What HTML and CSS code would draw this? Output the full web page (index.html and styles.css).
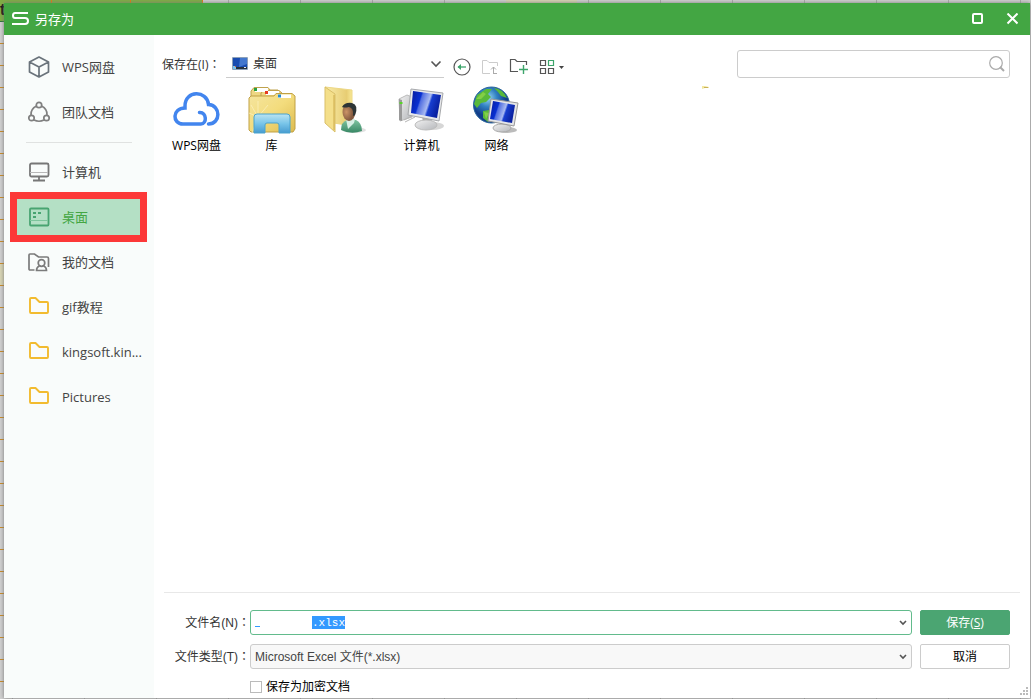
FILE: index.html
```html
<!DOCTYPE html>
<html lang="zh-CN">
<head>
<meta charset="utf-8">
<title>另存为</title>
<link rel="stylesheet" href="styles.css">
</head>
<body>
<div class="sheet-cells" aria-hidden="true"><span>t</span></div>
<div class="dialog">
  <header class="titlebar">
    <svg class="logo" width="18" height="14" viewBox="0 0 18 14" fill="none" stroke="#fff" stroke-width="2"><path d="M17 1H4Q2 1 2 3.500T4 6H14Q17 6 17 9T14 12H1"/></svg>
    <h1>另存为</h1>
    <button class="win-btn" aria-label="最大化"><svg width="12" height="12" viewBox="0 0 12 12" fill="none" stroke="#fff" stroke-width="2"><rect x="2" y="1" width="9" height="9" rx="1"/></svg></button>
    <button class="win-btn" aria-label="关闭"><svg width="12" height="12" viewBox="0 0 12 12" stroke="#fff" stroke-width="2"><path d="M1.500 .5L11.500 10.500M11.500 .5L1.500 10.500"/></svg></button>
  </header>
  <div class="content">
    <nav class="sidebar">
      <a href="#" class="place"><svg width="24" height="24" viewBox="0 0 24 24" fill="none" stroke="#6a737b" stroke-width="1.700" stroke-linejoin="round"><path d="M12 2L21.500 7V17L12 22L2.500 17V7ZM2.500 7L12 12L21.500 7M12 12V22"/></svg><span>WPS网盘</span></a>
      <a href="#" class="place"><svg width="24" height="24" viewBox="0 0 24 24" fill="none" stroke="#808080" stroke-width="1.700"><circle cx="12" cy="5" r="2.700"/><circle cx="4.500" cy="18" r="2.700"/><circle cx="19.500" cy="18" r="2.700"/><path d="M9.500 6Q3.500 9 4 15M14.500 6Q20.500 9 20 15M7 20Q12 22.500 17 20"/></svg><span>团队文档</span></a>
      <hr>
      <a href="#" class="place"><svg width="24" height="24" viewBox="0 0 24 24" fill="none" stroke="#777" stroke-width="1.800"><rect x="3" y="3.500" width="18.500" height="13" rx="1.500"/><path d="M12 17V20M6 20.500H18"/><path d="M3 12.500H21" stroke="#b8b8b8" stroke-width="1"/></svg><span>计算机</span></a>
      <a href="#" class="place current" aria-current="page"><svg width="24" height="24" viewBox="0 0 24 24" fill="none" stroke="#48a471" stroke-width="1.800"><rect x="3" y="3.500" width="18.500" height="17" rx="1"/><path d="M6 8H9M11 8H14M6 12H9"/><path d="M3 15.500H21" stroke="#7dc59c" stroke-width="1"/></svg><span>桌面</span></a>
      <a href="#" class="place"><svg width="24" height="24" viewBox="0 0 24 24" fill="none" stroke="#7b7b7b" stroke-width="1.700"><path d="M7.500 20H3Q2 20 2 19V5Q2 4 3 4H7.500L11.500 7H20Q21.500 7 21.500 8.500V17"/><circle cx="14.500" cy="13" r="3.300"/><path d="M12.500 16Q9.500 17 9.500 20.500H19.500Q19.500 17 16.500 16"/></svg><span>我的文档</span></a>
      <a href="#" class="place"><svg width="24" height="24" viewBox="0 0 24 24" fill="none" stroke="#f2bb2f" stroke-width="1.900" stroke-linejoin="round"><path d="M3 4Q3 3 4 3H8.500L12.500 7H20Q21 7 21 8V17Q21 18 20 18H4Q3 18 3 17Z"/></svg><span>gif教程</span></a>
      <a href="#" class="place"><svg width="24" height="24" viewBox="0 0 24 24" fill="none" stroke="#f2bb2f" stroke-width="1.900" stroke-linejoin="round"><path d="M3 4Q3 3 4 3H8.500L12.500 7H20Q21 7 21 8V17Q21 18 20 18H4Q3 18 3 17Z"/></svg><span>kingsoft.kin...</span></a>
      <a href="#" class="place"><svg width="24" height="24" viewBox="0 0 24 24" fill="none" stroke="#f2bb2f" stroke-width="1.900" stroke-linejoin="round"><path d="M3 4Q3 3 4 3H8.500L12.500 7H20Q21 7 21 8V17Q21 18 20 18H4Q3 18 3 17Z"/></svg><span>Pictures</span></a>
    </nav>
    <main class="main">
      <div class="toolbar">
        <label class="in-label" for="folder">保存在(I)<span class="colon" lang="zh-TW">：</span></label>
        <div class="folder-box">
          <svg width="16" height="14" viewBox="0 0 16 14"><rect width="16" height="13" rx="1" fill="#8ca0b8"/><path d="M1 1H15V10H1Z" fill="#194cb0"/><path d="M8 1H15V7L7 10Z" fill="#4377ce"/><path d="M1 10H15V12H1Z" fill="#26313c"/><path d="M1 9H4V12H1Z" fill="#79c4f0"/><path d="M3 9H4V10H3Z" fill="#f05b21"/><path d="M12 10H14V11H12Z" fill="#eee"/></svg>
          <select id="folder"><option>桌面</option></select>
          <svg width="12" height="8" viewBox="0 0 12 8" fill="none" stroke="#555" stroke-width="1.600"><path d="M1.500 1.500L6 6L10.500 1.500"/></svg>
        </div>
        <div class="tools">
          <button aria-label="后退"><svg width="18" height="18" viewBox="0 0 18 18" fill="none"><circle cx="9" cy="9" r="8" stroke="#555" stroke-width="1.200"/><path d="M5 9H13" stroke="#3da56b" stroke-width="1.300"/><path d="M8 6V12L4.500 9Z" fill="#3da56b"/></svg></button>
          <button aria-label="上一级" disabled><svg width="18" height="18" viewBox="0 0 18 18" fill="none" stroke="#ccc"><path d="M9 15.500H1.500V2.500H6L8 4.500H16.500V8"/><path d="M12.500 15.500H16M12.500 16V9M10 11.500L12.500 9L15 11.500" stroke="#aaa"/></svg></button>
          <button aria-label="新建文件夹"><svg width="20" height="18" viewBox="0 0 20 18" fill="none" stroke="#555" stroke-width="1.200"><path d="M9 13.500H1.500V1.500H6L8 3.500H17.500V7"/><path d="M14.500 7V16M10 11.500H19" stroke="#3da56b" stroke-width="1.400"/></svg></button>
          <button aria-label="视图"><svg width="26" height="16" viewBox="0 0 26 16" fill="none" stroke="#555" stroke-width="1.200"><path d="M1.500 1.500H6.500V6.500H1.500ZM1.500 9.500H6.500V14.500H1.500ZM9.500 9.500H14.500V14.500H9.500Z"/><path d="M9.500 1.500H14.500V6.500H9.500Z" stroke="#3da56b"/><path d="M20 7H25L22.500 10Z" fill="#444" stroke="none"/></svg></button>
        </div>
        <div class="search">
          <input type="search" aria-label="搜索">
          <svg width="16" height="16" viewBox="0 0 16 16" fill="none" stroke="#aaa"><circle cx="7" cy="7" r="6.300" stroke-width="1.200"/><path d="M11 11L15 15" stroke-width="2"/></svg>
        </div>
      </div>
      <div class="files">
        <svg class="speck" width="8" height="4" viewBox="0 0 8 4"><path d="M0 0H3L7 1V2H3L0 3Z" fill="#f3e7a0"/><path d="M2 1H6V2H2Z" fill="#c8b15a"/></svg>
        <a href="#" class="file"><svg width="48" height="48" viewBox="0 0 48 48" fill="none" stroke="#4285ee" stroke-width="3.500" stroke-linecap="round"><path d="M26.500 26.500C34 26 34 38 28 38H10C-1 38 -1 22 12 22V20C12 4 34 4 35.500 18.500C48 19 48 38 35.500 38"/></svg><span>WPS网盘</span></a>
        <a href="#" class="file"><svg width="48" height="48" viewBox="0 0 48 48">
          <defs><linearGradient id="fold" x1="0" y1="0" x2="1" y2="1"><stop stop-color="#f5e5a0"/><stop offset=".5" stop-color="#f3dc7d"/><stop offset="1" stop-color="#ddbb4f"/></linearGradient><linearGradient id="lib" x2="0" y2="1"><stop stop-color="#bbe4f2"/><stop offset=".5" stop-color="#79c5e9"/><stop offset="1" stop-color="#469bd0"/></linearGradient></defs>
          <g fill="#eed783" stroke="#bfa24d"><path d="M3 11V5L6 1.500H20L22 4H30V44H3Z"/><path d="M13 12V7L16 4.500H31L34 7V20H13Z"/></g><path d="M7 2H20V6H7ZM18 5H31V9H18Z" fill="#fff"/><path d="M6 2H9V5H6Z" fill="#29a03e"/><path d="M17 5H20V8H17Z" fill="#e63b1e"/>
          <path d="M1 12L3 10H26L28 7.500H44L47 10V43L45 46H3L1 44Z" fill="url(#fold)" stroke="#c1a144"/><path d="M30 8.500H43V12H30Z" fill="#fff"/><path d="M30 8.500H33V11.500H30Z" fill="#268ad0"/>
          <path d="M4 47L10 31L1 27M10 31L20 19M10 31V15M10 31L24 28M10 31L3 19" stroke="#fff5c9" fill="none" opacity=".6"/><circle cx="9" cy="31" r="3" fill="#fff" opacity=".7"/>
          <path d="M6 47V31Q6 28 9 28H39Q42 28 42 31V47H31V39Q31 37 29 37H19Q17 37 17 39V47Z" fill="url(#lib)" stroke="#4ba3ce"/></svg><span>库</span></a>
        <a href="#" class="file" aria-label="用户文件夹"><svg width="48" height="48" viewBox="0 0 48 48">
          <defs><linearGradient id="paper"><stop stop-color="#faedac"/><stop offset=".8" stop-color="#e7cd73"/><stop offset="1" stop-color="#f8e896"/></linearGradient><radialGradient id="face" cx=".3" cy=".5"><stop stop-color="#cc9467"/><stop offset="1" stop-color="#82593f"/></radialGradient><linearGradient id="coat" x2="0" y2="1"><stop stop-color="#7fc3a0"/><stop offset="1" stop-color="#378764"/></linearGradient></defs>
          <ellipse cx="31" cy="44" rx="12" ry="3" fill="#ccc" opacity=".6"/><path d="M2 1L29 4V40L11 37V8Z" fill="url(#paper)" stroke="#edd885"/><path d="M2 1L12 8V46L2 37Z" fill="#f4df8a" stroke="#d9bf69"/><path d="M11 9V44" stroke="#cfad4d"/>
          <path d="M18 44Q18 36 24 34L33 34Q39 37 39 45Q28 49 18 44Z" fill="url(#coat)"/><path d="M23 33H32L31 37L25 43Z" fill="#d7efe4"/><ellipse cx="26" cy="26" rx="6.500" ry="9" fill="url(#face)"/><path d="M19 21Q22 16 29 17Q36 19 32 29L30 30Q31 22 26 21Q21 22 19 21Z" fill="#2d3536"/></svg><span></span></a>
        <a href="#" class="file"><svg width="48" height="48" viewBox="0 0 48 48">
          <defs><linearGradient id="screen" x2="1" y2=".3"><stop stop-color="#071b9c"/><stop offset=".35" stop-color="#0830d2"/><stop offset=".4" stop-color="#526fe1"/><stop offset=".65" stop-color="#a9baf1"/><stop offset=".72" stop-color="#183ed0"/><stop offset="1" stop-color="#0a22a2"/></linearGradient><linearGradient id="metal" x2="1" y2="1"><stop stop-color="#f1f1f1"/><stop offset="1" stop-color="#b4b6ba"/></linearGradient></defs>
          <ellipse cx="34" cy="40" rx="12" ry="4" fill="#bbb" opacity=".6"/><path d="M1 13L9 9L14 11V31L2 35Z" fill="url(#metal)" stroke="#bbb"/><path d="M1 13L4 14V35L1 34Z" fill="#999"/><path d="M1.500 16H4.500V18H1.500Z" fill="#58d428"/><path d="M6 34L16 29M7 36L17 31" stroke="#b5b5b5"/>
          <path d="M24 29H33L34 37H25Z" fill="#aaa"/><ellipse cx="28" cy="39" rx="11" ry="5" fill="url(#metal)" stroke="#bbb"/><path d="M13 3L45 7L41 35L10 29Z" fill="#e7e8ea" stroke="#a7a9ac"/><path d="M15 5L43 9L39 32L13 27Z" fill="url(#screen)"/></svg><span>计算机</span></a>
        <a href="#" class="file"><svg width="48" height="48" viewBox="0 0 48 48">
          <defs><radialGradient id="globe" cx=".4" cy=".3"><stop stop-color="#9bd7f3"/><stop offset=".5" stop-color="#3181c3"/><stop offset="1" stop-color="#123f8b"/></radialGradient></defs>
          <circle cx="18.500" cy="19" r="18" fill="url(#globe)" stroke="#2c679c"/><path d="M4 9L13 3L19 3L15 8L18 11L13 16L8 17L4 22L1 18ZM21 2Q30 3 34 12L28 10L25 6ZM10 25L16 24L20 28L15 36L10 32Z" fill="#59b93a"/><path d="M3 13L10 6L13 8L8 13ZM11 26L16 27L13 33Z" fill="#95d84b" opacity=".7"/>
          <ellipse cx="34" cy="44" rx="10" ry="3" fill="#bbb"/><path d="M27 36H34V43H27Z" fill="#aaa"/><ellipse cx="29" cy="42" rx="9" ry="4" fill="url(#metal)" stroke="#aaa"/><path d="M18 13L45 17L41 40L15 35Z" fill="#e4e5e7" stroke="#999"/><path d="M20 15L42 19L39 37L17 33Z" fill="url(#screen)"/></svg><span>网络</span></a>
      </div>
      <form class="footer">
        <label class="name" for="name">文件名(N)<span class="colon" lang="zh-TW">：</span></label>
        <div class="field active">
          <input id="name" type="text" value=".xlsx">
          <svg width="8" height="6" viewBox="0 0 8 6" fill="none" stroke="#555" stroke-width="1.600"><path d="M1 1L4 4L7 1"/></svg>
        </div>
        <button type="button" class="btn save">保存(<u>S</u>)</button>
        <label class="name" for="type">文件类型(T)<span class="colon" lang="zh-TW">：</span></label>
        <div class="field">
          <select id="type"><option>Microsoft Excel 文件(*.xlsx)</option></select>
          <svg width="8" height="6" viewBox="0 0 8 6" fill="none" stroke="#555" stroke-width="1.600"><path d="M1 1L4 4L7 1"/></svg>
        </div>
        <button type="button" class="btn">取消</button>
        <label class="encrypt"><input type="checkbox">保存为加密文档</label>
      </form>
    </main>
  </div>
  <svg class="grip" width="9" height="9" viewBox="0 0 9 9" fill="#bbb"><path d="M6 0H8V2H6ZM3 3H5V5H3ZM6 3H8V5H6ZM0 6H2V8H0ZM3 6H5V8H3ZM6 6H8V8H6Z"/></svg>
</div>
</body>
</html>
```
FILE: styles.css
```css
* { box-sizing: border-box; }

body {
  margin: 0;
  min-height: 100vh;
  padding: 3px 1px 1px 4px;
  display: flex;
  font: 12px/18px "Open Sans", "Noto Sans CJK SC", sans-serif;
  color: #333;
  background:
    linear-gradient(#d8d5b4, #d8d5b4) 0 264px / 4px 21px no-repeat,
    linear-gradient(#d8d5b4, #d8d5b4) 506px 0 / 71px 3px no-repeat,
    repeating-linear-gradient(transparent 0 21px, #c98a25 21px 22px) 0 22px / 4px 100% no-repeat,
    repeating-linear-gradient(90deg, transparent 0 71px, #aaa 71px 72px) 13px 0 / 1080px 100%,
    #d0d0d0;
}

.sheet-cells {
  position: absolute;
  left: 0;
  top: 0;
  width: 203px;
  height: 22px;
  border-right: 1px solid #e07c12;
  border-bottom: 1px solid #277636;
  background:
    linear-gradient(#e07c12, #e07c12) 51px 0 / 1px 100% no-repeat,
    linear-gradient(#e07c12, #e07c12) 130px 0 / 1px 100% no-repeat,
    #7fae43;
  color: #111;
  font: bold 16px/20px "Liberation Sans", sans-serif;
}

a { color: inherit; text-decoration: none; }

button { padding: 0; border: 0; background: none; font: inherit; color: inherit; }

svg { display: block; flex: none; }

input, select {
  min-width: 0;
  margin: 0;
  padding: 0;
  border: 0;
  outline: 0;
  background: none;
  font: inherit;
  color: inherit;
  appearance: none;
}

.colon { font-family: "Noto Sans CJK TC", sans-serif; line-height: 1; }

.dialog {
  position: relative;
  flex: 1;
  display: flex;
  flex-direction: column;
  background: #fff;
  box-shadow: 0 0 4px #777;
}

.titlebar {
  height: 32px;
  display: flex;
  align-items: center;
  padding: 0 6px 0 7px;
  background: #43a643;
  color: #fff;
}

.titlebar h1 {
  flex: 1;
  margin: 0 0 0 6px;
  font-size: 13px;
  line-height: 16px;
  font-weight: 400;
}

.win-btn {
  width: 12px;
  margin-left: 23px;
}

.win-btn + .win-btn { margin-right: 6px; }

.content { flex: 1; display: flex; }

.sidebar {
  width: 150px;
  flex: none;
  padding-top: 9px;
  background: #f9fcfb;
  color: #444;
  font-size: 13px;
}

.sidebar hr {
  height: 1px;
  margin: 8px 22px 6px;
  border: 0;
  background: #e0e2e1;
}

.place {
  position: relative;
  z-index: 0;
  height: 45px;
  display: flex;
  align-items: center;
  gap: 11px;
  padding-left: 23px;
  white-space: nowrap;
}

.current { color: #43a643; }

.current::before {
  content: "";
  position: absolute;
  z-index: -1;
  inset: -2px 7px -3px 6px;
  border: 7px solid #fc3838;
  background: #b4e0c5;
}

.main {
  flex: 1;
  min-width: 0;
  display: flex;
  flex-direction: column;
  padding-top: 15px;
}

.toolbar {
  height: 28px;
  display: flex;
  padding: 0 20px 0 8px;
}

.in-label {
  width: 64px;
  flex: none;
  line-height: 30px;
  white-space: nowrap;
}

.folder-box {
  width: 218px;
  display: flex;
  align-items: center;
  gap: 5px;
  padding: 0 2px 0 6px;
  border-bottom: 1px solid #ccc;
}

.folder-box select { flex: 1; line-height: 20px; padding-top: 1px; }

.tools {
  display: flex;
  align-items: center;
  gap: 10px;
  padding: 5px 0 0 9px;
}

.search {
  width: 273px;
  display: flex;
  align-items: center;
  margin-left: auto;
  padding: 0 4px;
  border: 1px solid #ccc;
  border-radius: 3px;
}

.search input { flex: 1; }

.files {
  position: relative;
  flex: 1;
  display: flex;
  flex-wrap: wrap;
  align-content: flex-start;
  padding: 8px 5px;
  color: #000;
}

.speck { position: absolute; left: 548px; top: 8px; }

.file {
  width: 75px;
  display: flex;
  flex-direction: column;
  align-items: center;
}

.file span { line-height: 24px; }

.footer {
  display: grid;
  grid-template-columns: 86px 1fr 90px;
  row-gap: 9px;
  margin: 0 10px;
  padding: 17px 10px 2px 0;
  border-top: 1px solid #e8e8e8;
  font-family: "Liberation Sans", "Noto Sans CJK SC", sans-serif;
}

.name {
  line-height: 26px;
  height: 25px;
  text-align: right;
  white-space: nowrap;
}

.field {
  height: 25px;
  display: flex;
  align-items: center;
  margin-right: 8px;
  padding: 0 4px;
  border: 1px solid #ccc;
  border-radius: 3px;
  background: #f8f8f8;
  color: #444;
}

.field input, .field select { flex: 1; }

.field.active { border-color: #62bb8c; background: #fff; }

.field.active input {
  height: 14px;
  padding-left: 57px;
  color: #fff;
  font: 11px/14px "Liberation Mono", monospace;
  background:
    linear-gradient(#3399ff, #3399ff) 57px 0 / 33px 13px no-repeat,
    linear-gradient(#3399ff, #3399ff) 0 10px / 5px 1px no-repeat;
}

.btn {
  height: 25px;
  border: 1px solid #ccc;
  border-radius: 2px;
  background: #fff;
  color: #000;
  font-family: "Open Sans", "Noto Sans CJK SC", sans-serif;
}

.btn.save { border-color: #4ba572; background: #4ba572; color: #fff; }

.encrypt {
  grid-column: 2;
  justify-self: start;
  display: flex;
  align-items: center;
  gap: 4px;
  color: #000;
}

.encrypt input {
  width: 12px;
  height: 12px;
  border: 1px solid #bbb;
  background: #fff;
}

.grip { position: absolute; right: 1px; bottom: 2px; }
```
